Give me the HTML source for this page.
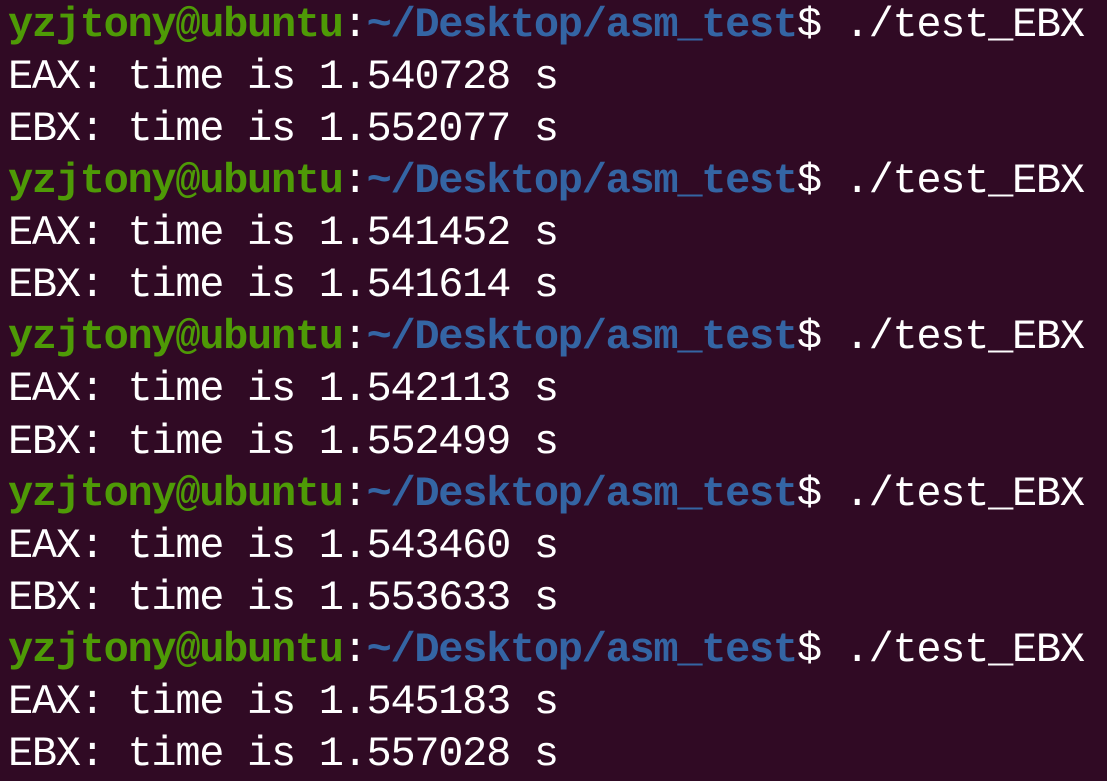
<!DOCTYPE html>
<html><head><meta charset="utf-8"><style>
html,body{margin:0;padding:0;background:#300a24;width:1107px;height:781px;overflow:hidden}
pre{margin:0;padding:0 0 0 8px;font-family:"Liberation Mono","DejaVu Sans Mono",monospace;font-size:42px;letter-spacing:-1.3px;line-height:52.07px;color:#ffffff;position:relative;top:-1px}
.g{color:#4e9a06;font-weight:bold}.b{color:#3465a4;font-weight:bold}
</style></head><body><pre><span class="g">yzjtony@ubuntu</span>:<span class="b">~/Desktop/asm_test</span>$ ./test_EBX
EAX: time is 1.540728 s
EBX: time is 1.552077 s
<span class="g">yzjtony@ubuntu</span>:<span class="b">~/Desktop/asm_test</span>$ ./test_EBX
EAX: time is 1.541452 s
EBX: time is 1.541614 s
<span class="g">yzjtony@ubuntu</span>:<span class="b">~/Desktop/asm_test</span>$ ./test_EBX
EAX: time is 1.542113 s
EBX: time is 1.552499 s
<span class="g">yzjtony@ubuntu</span>:<span class="b">~/Desktop/asm_test</span>$ ./test_EBX
EAX: time is 1.543460 s
EBX: time is 1.553633 s
<span class="g">yzjtony@ubuntu</span>:<span class="b">~/Desktop/asm_test</span>$ ./test_EBX
EAX: time is 1.545183 s
EBX: time is 1.557028 s</pre></body></html>
